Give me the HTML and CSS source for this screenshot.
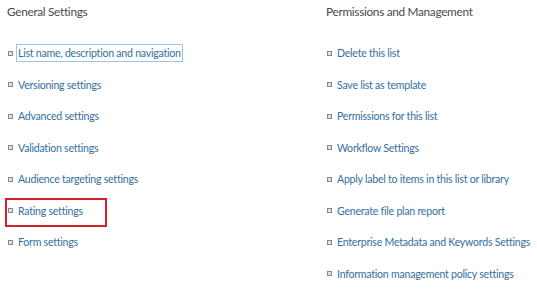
FILE: index.html
```html
<!DOCTYPE html>
<html>
<head>
<meta charset="utf-8">
<link rel="stylesheet" href="styles.css">
</head>
<body>
<div class="page">
  <section class="col col-left">
    <h2 class="heading">General Settings</h2>
    <ul class="links">
      <li class="item"><span class="bullet"></span><a class="link focused">List name, description and navigation</a></li>
      <li class="item"><span class="bullet"></span><a class="link">Versioning settings</a></li>
      <li class="item"><span class="bullet"></span><a class="link">Advanced settings</a></li>
      <li class="item"><span class="bullet"></span><a class="link">Validation settings</a></li>
      <li class="item"><span class="bullet"></span><a class="link">Audience targeting settings</a></li>
      <li class="item highlighted"><span class="bullet"></span><a class="link">Rating settings</a><span class="redbox"></span></li>
      <li class="item"><span class="bullet"></span><a class="link">Form settings</a></li>
    </ul>
  </section>
  <section class="col col-right">
    <h2 class="heading">Permissions and Management</h2>
    <ul class="links">
      <li class="item"><span class="bullet"></span><a class="link">Delete this list</a></li>
      <li class="item"><span class="bullet"></span><a class="link">Save list as template</a></li>
      <li class="item"><span class="bullet"></span><a class="link">Permissions for this list</a></li>
      <li class="item"><span class="bullet"></span><a class="link">Workflow Settings</a></li>
      <li class="item"><span class="bullet"></span><a class="link">Apply label to items in this list or library</a></li>
      <li class="item"><span class="bullet"></span><a class="link">Generate file plan report</a></li>
      <li class="item"><span class="bullet"></span><a class="link">Enterprise Metadata and Keywords Settings</a></li>
      <li class="item"><span class="bullet"></span><a class="link">Information management policy settings</a></li>
    </ul>
  </section>
</div>
</body>
</html>
```
FILE: styles.css
```css
html, body {
  margin: 0;
  padding: 0;
  background: #ffffff;
}
body {
  font-family: Lato, "Open Sans", sans-serif;
  width: 537px;
  height: 290px;
  overflow: hidden;
}
.page {
  display: flex;
  padding: 4px 0 0 7px;
}
.col-left {
  width: 319px;
  flex: none;
}
.col-right {
  flex: 1;
  min-width: 0;
}
.heading {
  margin: 0;
  font-size: 11.8px;
  font-weight: 400;
  color: #4a4a4a;
  line-height: 16px;
  letter-spacing: -0.3px;
}
.links {
  list-style: none;
  margin: 25px 0 0 0;
  padding: 0;
  display: flex;
  flex-direction: column;
  gap: 15.5px;
}
.item {
  position: relative;
  display: flex;
  align-items: center;
  height: 16px;
}
.bullet {
  width: 3px;
  height: 3px;
  border: 1px solid #7f8c96;
  background: #dde3e8;
  margin: 0 5px 0 1px;
  flex: none;
}
.link {
  font-size: 10.6px;
  color: #336fa0;
  line-height: 14px;
  letter-spacing: -0.25px;
  white-space: nowrap;
}
.focused {
  outline: 1px solid #9fc3e0;
  outline-offset: 1px;
}
.redbox {
  position: absolute;
  left: -2px;
  top: -5px;
  width: 98px;
  height: 25px;
  border: 2px solid #d42027;
}
```
